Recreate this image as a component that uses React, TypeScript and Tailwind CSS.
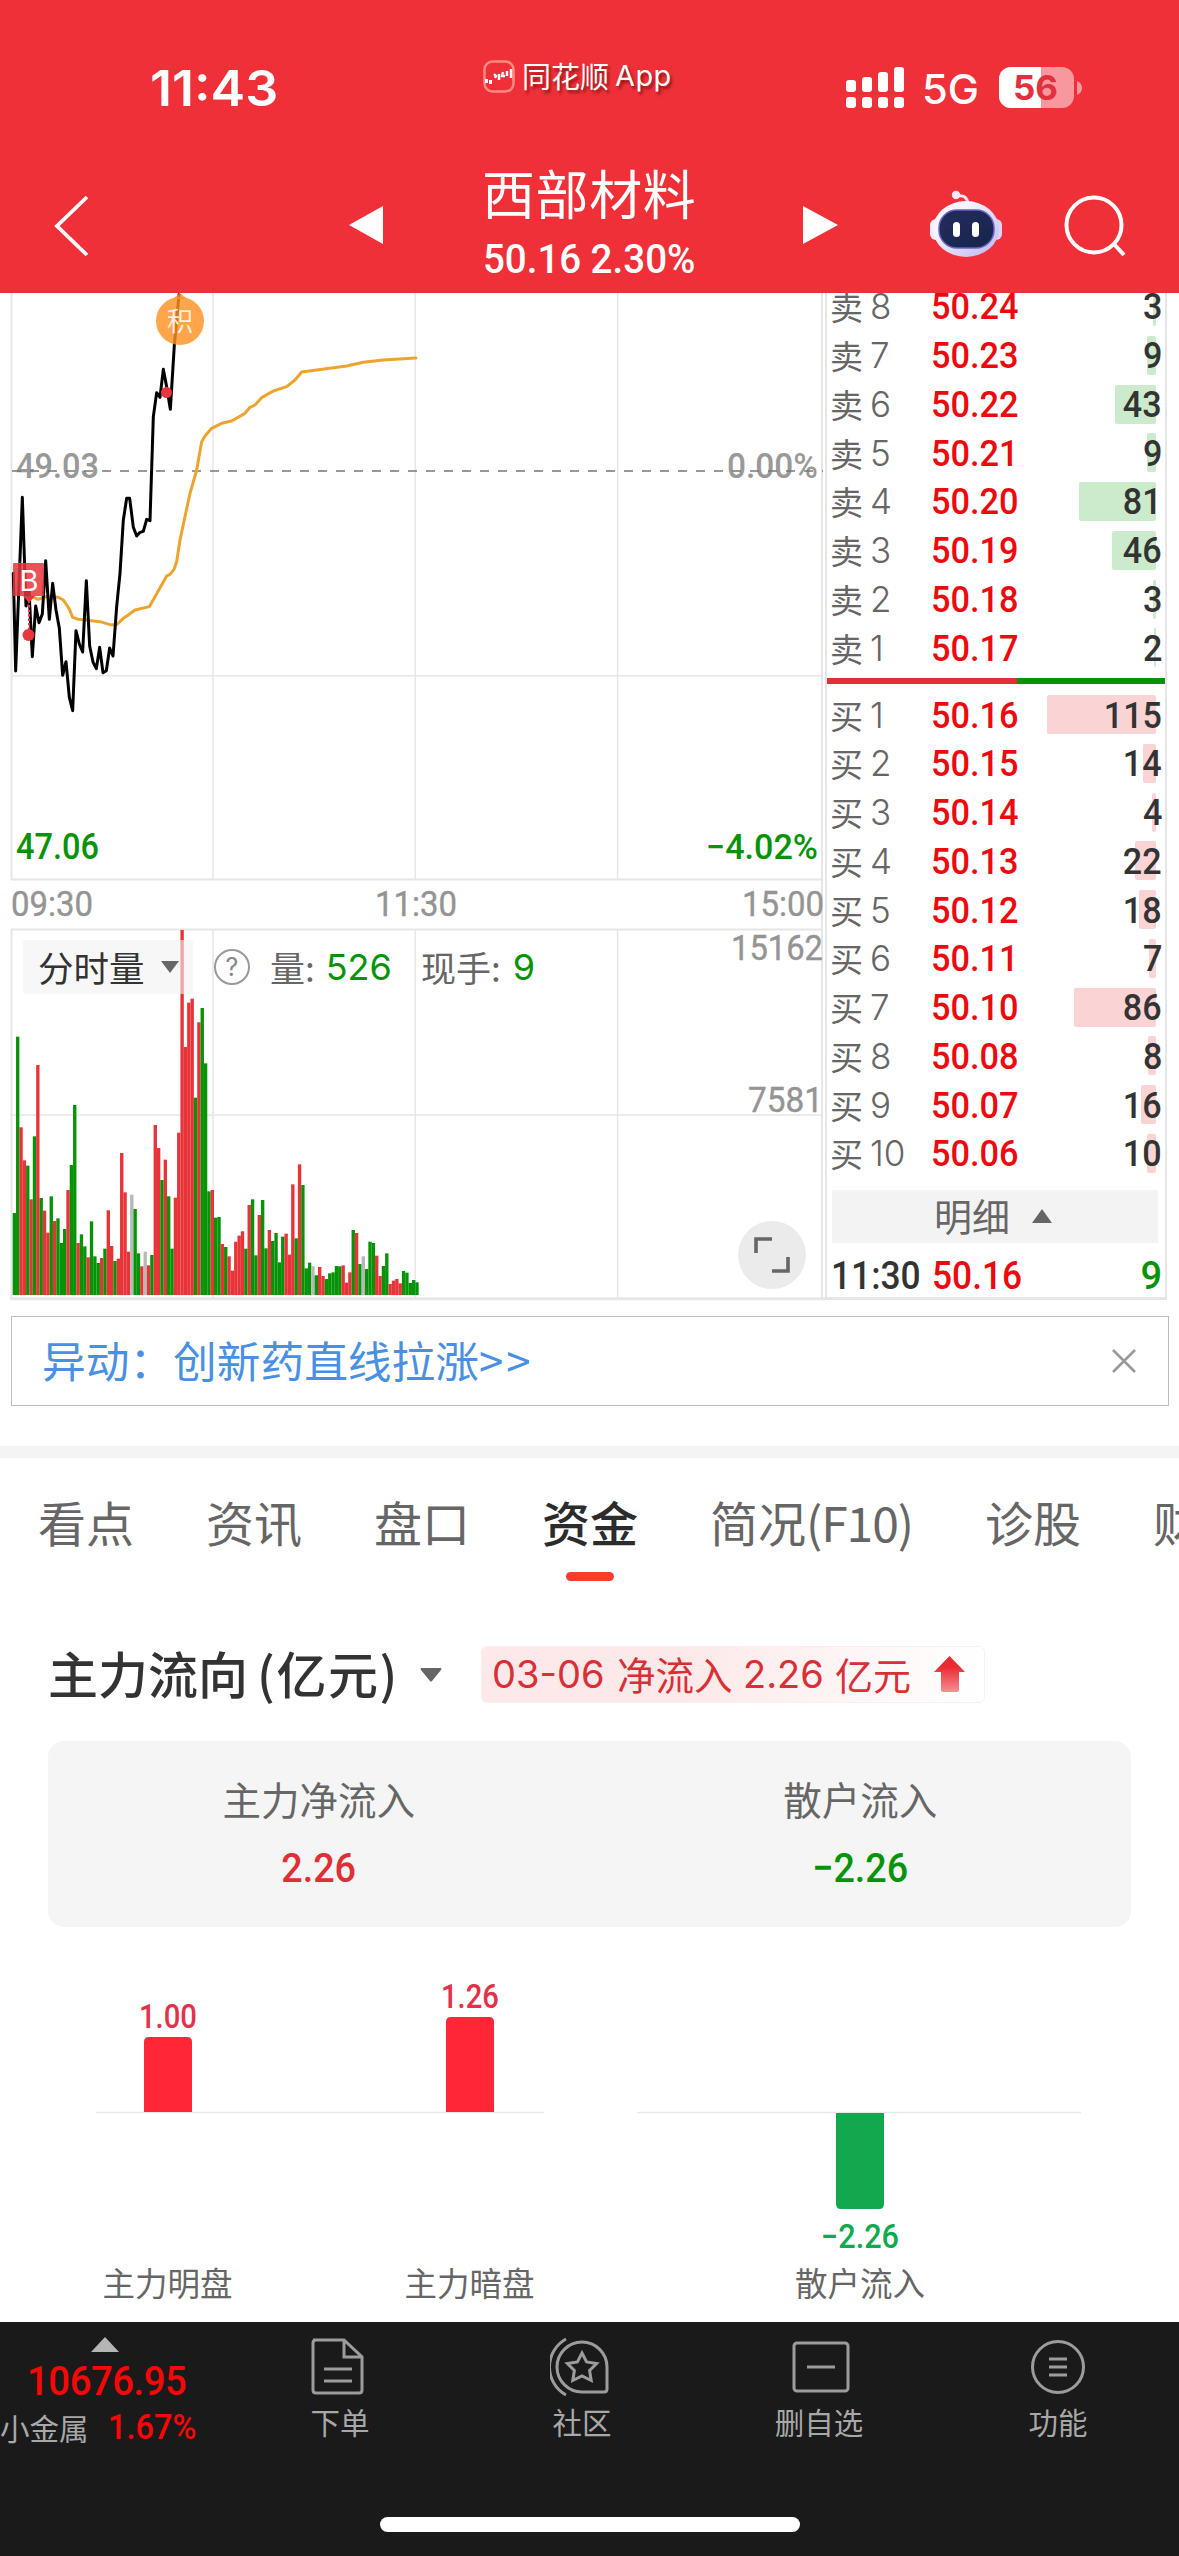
import React from "react";

type Tone = "r" | "g" | "s";

const TONES: Record<Tone, string> = { r: "#e83339", g: "#079307", s: "#b8b8b8" };

// Minute volumes: tone and bar top, in thirds of a pixel above the 795 baseline.
const VOLUMES =
  "g549 g20 r292 r391 g407 r508 g319 r105 g504 r542 r608 g499 r573 g565 g639 g597 r480 g405 g225 r639 g613 g649 r682 g574 g679 g699 r684 g656 r541 r648 g693 r686 r369 r487 r665 s494 g537 g670 r709 s665 r706 g675 r285 r354 g450 r389 g499 g656 r503 r308 r-300 r51 r-82 r-94 g203 r-23 g-66 g100 g484 r480 g563 g561 r642 g651 r679 r722 r635 r617 r604 g656 r525 g508 g676 r555 g510 g655 r600 g633 g609 g697 g620 r611 r674 r463 g625 r403 g465 g715 g698 s709 g736 r711 r738 g747 g730 g727 g708 g709 r706 r758 r727 g600 r609 g702 s679 g717 g635 g639 r677 r738 g708 g670 r762 r752 r747 r760 g723 g728 g759 g750 g757"
    .split(" ")
    .map((v) => ({ tone: v[0] as Tone, top: Number(v.slice(1)) }));

const PRICE =
  "40,850 47,1143 67,622 78,948 87,900 97,1100 107,948 117,998 127,972 137,812 148,988 158,880 168,960 178,1015 188,1156 198,1115 208,1222 218,1262 228,1022 238,1062 248,1086 259,872 269,1068 279,1116 289,1136 299,1072 309,1148 319,1142 329,1074 339,1098 350,950 360,850 370,690 380,625 389,625 400,712 410,738 420,727 430,724 440,688 450,692 460,380 470,308 480,322 490,238 500,290 511,358 523,165 537,14";

const AVERAGE =
  "95,920 115,928 135,920 175,922 190,930 207,955 218,982 235,988 300,995 330,1004 350,1004 370,985 385,975 405,960 448,950 500,858 510,853 522,838 530,815 540,750 570,610 590,540 605,455 615,438 635,415 665,400 695,393 735,370 750,352 765,345 785,323 820,303 860,290 885,270 905,246 1040,228 1090,217 1150,210 1248,204";

const ASKS = [
  ["8", "50.24", 3],
  ["7", "50.23", 9],
  ["6", "50.22", 43],
  ["5", "50.21", 9],
  ["4", "50.20", 81],
  ["3", "50.19", 46],
  ["2", "50.18", 3],
  ["1", "50.17", 2],
] as const;

const BIDS = [
  ["1", "50.16", 115],
  ["2", "50.15", 14],
  ["3", "50.14", 4],
  ["4", "50.13", 22],
  ["5", "50.12", 18],
  ["6", "50.11", 7],
  ["7", "50.10", 86],
  ["8", "50.08", 8],
  ["9", "50.07", 16],
  ["10", "50.06", 10],
] as const;

function StatusBar() {
  return (
    <div className="relative flex h-[160px] items-start justify-between">
      <div className="ml-[150px] mt-[58px] origin-left scale-x-[1.04] font-['Inter'] text-[50px] font-semibold leading-[60px]">
        11:43
      </div>
      <div className="absolute left-[483px] top-[53px] flex items-center">
        <svg width="32" height="36" viewBox="0 0 32 36" fill="none">
          <rect x="1.5" y="4.5" width="29" height="30" rx="8" stroke="#ff8a80" strokeWidth="2.5" />
          <path d="M2 24h3M6 25h3" stroke="#fff" strokeWidth="4" />
          <path d="M11 17l2 2-1 2M16 17v6M20 15l-1 4h3M24 14v5M28 12v9" stroke="#fff" strokeWidth="2.4" />
        </svg>
        <span className="ml-[7px] font-['Noto_Sans_CJK_SC',sans-serif] text-[29px] leading-[40px] [text-shadow:2px_3px_3px_rgba(80,0,0,0.6)]">
          同花顺
        </span>
        <span className="ml-[6px] mt-[3px] font-['Inter'] text-[29px] leading-[40px] tracking-[0.4px] [text-shadow:2px_3px_3px_rgba(80,0,0,0.6)]">
          App
        </span>
      </div>
      <svg className="mr-[94px] mt-[60px]" width="240" height="56" viewBox="845 60 240 56">
        <g fill="#fff">
          <rect x="846" y="80" width="10" height="12" rx="3" />
          <rect x="862" y="77" width="10" height="15" rx="3" />
          <rect x="878" y="72" width="10" height="20" rx="3" />
          <rect x="894" y="67" width="10" height="25" rx="3" />
          <rect x="846" y="97" width="10" height="11" rx="3" />
          <rect x="862" y="97" width="10" height="11" rx="3" />
          <rect x="878" y="97" width="10" height="11" rx="3" />
          <rect x="894" y="97" width="10" height="11" rx="3" />
          <text x="922" y="104" fontFamily="Inter" fontWeight="500" fontSize="41" textLength="57" lengthAdjust="spacingAndGlyphs">
            5G
          </text>
          <rect x="999" y="67" width="75" height="41" rx="12" fillOpacity="0.5" />
          <path d="M1041 67h-30a12 12 0 0 0-12 12v17a12 12 0 0 0 12 12h30z" />
          <path d="M1077 81q5 2 5 7t-5 7z" fillOpacity="0.5" />
        </g>
        <text x="1013" y="100" fontFamily="Inter" fontWeight="700" fontSize="34" fill="#e2313e" textLength="45" lengthAdjust="spacingAndGlyphs">
          56
        </text>
      </svg>
    </div>
  );
}

function Robot() {
  return (
    <svg width="74" height="70" viewBox="929 189 74 70">
      <defs>
        <linearGradient id="shell" x1="0" y1="0" x2="1" y2="1">
          <stop offset="0.3" stopColor="#f8f4fb" />
          <stop offset="1" stopColor="#b9b4f2" />
        </linearGradient>
        <linearGradient id="visor" x1="0" y1="0" x2="1" y2="1">
          <stop offset="0" stopColor="#262b5e" />
          <stop offset="1" stopColor="#14264a" />
        </linearGradient>
      </defs>
      <path d="M957 196q10-2 11 8" fill="none" stroke="#f1e4f3" strokeWidth="3" />
      <circle cx="956" cy="195" r="4.2" fill="#f6e9f5" />
      <rect x="930" y="219" width="12" height="21" rx="6" fill="#f4eefa" />
      <rect x="990" y="219" width="12" height="21" rx="6" fill="#dcd4f6" />
      <ellipse cx="966" cy="229" rx="33" ry="28" fill="url(#shell)" />
      <rect x="939" y="210" width="55" height="38" rx="18" fill="url(#visor)" stroke="#6a62c4" strokeWidth="1.5" />
      <rect x="953" y="222" width="7" height="15" rx="3.5" fill="#fff" />
      <rect x="972" y="222" width="7" height="15" rx="3.5" fill="#fff" />
    </svg>
  );
}

function TitleBar() {
  return (
    <div className="flex h-[133px] items-start">
      <svg className="ml-[53px] mt-[33px] shrink-0" width="40" height="66" fill="none">
        <path d="M34 4L4 33l30 29" stroke="#fff" strokeWidth="3.8" />
      </svg>
      <svg className="ml-[256px] mt-[46px] shrink-0" width="34" height="38">
        <path d="M0 19L34 0v38z" fill="#fff" />
      </svg>
      <div className="ml-[98px] w-[220px] shrink-0">
        <div className="-mt-[3px] h-[70px] whitespace-nowrap pl-px font-['Noto_Sans_CJK_SC',sans-serif] text-[53px] leading-[70px] tracking-[0.6px]">
          西部材料
        </div>
        <div className="mt-[7px] flex h-[50px] origin-left scale-x-[0.94] gap-[10px] whitespace-nowrap pl-[2px] font-['Roboto'] text-[41px] font-medium leading-[50px]">
          <span>50.16</span>
          <span>2.30%</span>
        </div>
      </div>
      <svg className="ml-[102px] mt-[46px] shrink-0" width="35" height="38">
        <path d="M35 19L0 0v38z" fill="#fff" />
      </svg>
      <div className="ml-[91px] mt-[29px] shrink-0">
        <Robot />
      </div>
      <svg className="ml-[59px] mt-[33px] shrink-0" width="66" height="66" fill="none" stroke="#fff" strokeWidth="4">
        <circle cx="32" cy="32" r="27.5" />
        <path d="M52 51l10 11" />
      </svg>
    </div>
  );
}

function Charts() {
  return (
    <div className="relative h-[1008px] w-[825px] shrink-0">
      <svg className="overflow-visible" width="825" height="1008" viewBox="0 293 825 1008" fontFamily="Roboto">
        <g stroke="#e6e6e6" strokeWidth="1.5">
          <path d="M213 293V880M415.3 293V880M617.6 293V880M12 675.7H823" />
          <path d="M213 929V1298M415.3 929V1298M617.6 929V1298M12 1115H823" />
          <path d="M11 879.5H823M11 929.5H823" strokeWidth="2" />
          <path d="M11.5 293V880M11.5 929V1299M822 293V1299" strokeWidth="2" />
          <path d="M10 1298.7H825" strokeWidth="3" />
        </g>
        <g fontSize="35" fontWeight="500" fill="#999">
          <text x="16" y="477.5" textLength="83" lengthAdjust="spacingAndGlyphs">49.03</text>
          <text x="727" y="477.5" textLength="91" lengthAdjust="spacingAndGlyphs">0.00%</text>
          <text x="16" y="859" fill="#079307" fontSize="36" textLength="83" lengthAdjust="spacingAndGlyphs">47.06</text>
          <text x="706" y="859" fill="#079307" textLength="112" lengthAdjust="spacingAndGlyphs">−4.02%</text>
        </g>
        <g fontSize="35.5" fill="#949494" stroke="#949494" strokeWidth="0.4">
          <text x="11" y="916" textLength="82" lengthAdjust="spacingAndGlyphs">09:30</text>
          <text x="375" y="916" textLength="82" lengthAdjust="spacingAndGlyphs">11:30</text>
          <text x="742" y="916" textLength="82" lengthAdjust="spacingAndGlyphs">15:00</text>
          <text x="731" y="960" textLength="92" lengthAdjust="spacingAndGlyphs">15162</text>
          <text x="748" y="1112" textLength="75" lengthAdjust="spacingAndGlyphs">7581</text>
        </g>
        <path d="M12 471H823" stroke="#777" strokeWidth="1.6" strokeDasharray="9 9" />
        <g transform="translate(0 290) scale(0.33333)" fill="none" strokeLinejoin="round" strokeLinecap="round">
          <polyline points={AVERAGE} stroke="#eda42c" strokeWidth="9" />
          <polyline points={PRICE} stroke="#000" strokeWidth="9" />
        </g>
        <g transform="translate(0 1030) scale(0.33333)">
          {VOLUMES.map((v, i) => (
            <rect key={i} x={38 + i * 10.066} y={v.top} width="10.1" height={795 - v.top} fill={TONES[v.tone]} />
          ))}
        </g>
        <circle cx="166.5" cy="392.5" r="5.5" fill="#e8353e" />
        <path d="M29 596V632" stroke="#e8353e" strokeWidth="2" strokeDasharray="2.5 2" />
        <circle cx="28.5" cy="635" r="6" fill="#e8353e" />
        <rect x="13" y="563" width="31" height="33" rx="1" fill="#e8353e" fillOpacity="0.85" />
        <path d="M23 596h12l-6 7z" fill="#e8353e" />
        <text x="19.5" y="590.5" fontFamily="Inter" fontSize="29" fill="#fff">B</text>
        <path d="M173 299l7-6 7 6z" fill="#ff9326" fillOpacity="0.82" />
        <circle cx="180" cy="321" r="24" fill="#ff9326" fillOpacity="0.82" />
        <text x="167" y="331" fontFamily="Noto Sans CJK SC" fontSize="26" fill="#fff" fillOpacity="0.85">积</text>
      </svg>
      <div className="absolute left-[23px] top-[647px] flex h-[54px] w-[170px] items-center rounded-[3px] bg-[#f1f1f1]/60">
        <span className="ml-[15px] font-['Noto_Sans_CJK_SC',sans-serif] text-[35.5px] leading-[54px] text-[#333]">分时量</span>
        <svg className="ml-[16px]" width="18" height="12">
          <path d="M0 0h18l-9 12z" fill="#666" />
        </svg>
      </div>
      <div className="absolute left-[214px] top-[647px] flex h-[54px] items-center whitespace-nowrap font-['Noto_Sans_CJK_SC',sans-serif] text-[35px] leading-[54px] text-[#666]">
        <span className="flex size-[36px] items-center justify-center rounded-full border-[2.5px] border-[#999] font-['Inter'] text-[25px] leading-[32px] text-[#888]">
          ?
        </span>
        <span className="ml-[20px]">量:</span>
        <span className="ml-[11px] font-['Inter'] text-[36px] text-[#079307]">526</span>
        <span className="ml-[29px]">现手:</span>
        <span className="ml-[12px] font-['Inter'] text-[36px] text-[#079307]">9</span>
      </div>
      <div className="absolute left-[738px] top-[928px] flex size-[68px] items-center justify-center rounded-full bg-[#ebebeb]">
        <svg width="36" height="36" fill="none" stroke="#666" strokeWidth="3.6">
          <path d="M2 16V2h16M34 20v14H18" />
        </svg>
      </div>
    </div>
  );
}

type BookRowProps = { side: string; level: string; price: string; qty: number; fill: string };

function BookRow({ side, level, price, qty, fill }: BookRowProps) {
  return (
    <div className="relative flex h-[48.78px] items-center pl-[3px] leading-[48px]">
      <div
        className={`absolute right-[9px] top-[5px] h-[39px] rounded-[2px] ${fill}`}
        style={{ width: Math.max(2, qty * 0.948) }}
      />
      <div className="relative flex w-[101px] items-center whitespace-nowrap text-[#666]">
        <span className="font-['Noto_Sans_CJK_SC',sans-serif] text-[33px]">{side}</span>
        <span className="ml-[7px] font-['Inter'] text-[35px] font-light">{level}</span>
      </div>
      <span className="relative origin-left scale-x-[0.915] font-['Roboto'] text-[37.5px] font-medium text-[#ec0a0e]">{price}</span>
      <span className="relative ml-auto mr-[3px] origin-right scale-x-[0.91] font-['Roboto'] text-[37.5px] font-medium text-[#333]">
        {qty}
      </span>
    </div>
  );
}

function OrderBook() {
  return (
    <div className="h-[1007px] w-[342px] shrink-0 overflow-hidden border-x-2 border-b-3 border-[#e6e6e6]">
      <div className="-mt-[11px]">
        {ASKS.map(([level, price, qty]) => (
          <BookRow key={level} side="卖" level={level} price={price} qty={qty} fill="bg-[#cbebcc]" />
        ))}
      </div>
      <div className="mt-[6px] flex h-[6px]">
        <div className="w-[190px] bg-[#df3035]" />
        <div className="flex-1 bg-[#079307]" />
      </div>
      <div className="mt-[6px]">
        {BIDS.map(([level, price, qty]) => (
          <BookRow key={level} side="买" level={level} price={price} qty={qty} fill="bg-[#fad3d5]" />
        ))}
      </div>
      <div className="ml-[5px] mt-[12px] flex h-[53px] w-[326px] items-center bg-[#f3f3f3] pl-[102px]">
        <span className="-mt-[4px] font-['Noto_Sans_CJK_SC',sans-serif] text-[38px] leading-[53px] text-[#666]">明细</span>
        <svg className="ml-[22px]" width="20" height="14">
          <path d="M0 14h20L10 0z" fill="#666" />
        </svg>
      </div>
      <div className="mt-[9px] flex h-[48px] items-center pl-[4px] font-['Roboto'] text-[38px] font-medium leading-[48px]">
        <span className="w-[101px] origin-left scale-x-[0.93] text-[#333]">11:30</span>
        <span className="origin-left scale-x-[0.93] text-[#ec0a0e]">50.16</span>
        <span className="ml-auto mr-[3px] text-[#079307]">9</span>
      </div>
    </div>
  );
}

function Tabs() {
  const tabs = ["看点", "资讯", "盘口", "资金", "简况(F10)", "诊股", "财务"];
  return (
    <div className="flex h-[132px] gap-[72px] overflow-hidden whitespace-nowrap pl-[38px] font-['Noto_Sans_CJK_SC',sans-serif] text-[48px] leading-[70px] text-[#666]">
      {tabs.map((t) =>
        t === "资金" ? (
          <div key={t} className="flex shrink-0 flex-col items-center pt-[28px] font-medium text-[#2c2c2c]">
            {t}
            <div className="mt-[16px] h-[9px] w-[48px] rounded-full bg-[#ff3b30]" />
          </div>
        ) : t.includes("(") ? (
          <div key={t} className="w-[203px] shrink-0 pt-[28px]">
            {t.slice(0, 2)}
            <span className="tracking-[-1.1px]">{t.slice(2)}</span>
          </div>
        ) : (
          <div key={t} className="shrink-0 pt-[28px]">
            {t}
          </div>
        ),
      )}
    </div>
  );
}

function FlowHeader() {
  return (
    <div className="mt-[56px] flex h-[57px] items-center pl-[48px]">
      <div className="-mt-[4px] flex w-[347px] items-center whitespace-nowrap font-['Noto_Sans_CJK_SC',sans-serif] text-[50px] font-medium leading-[57px] text-[#333]">
        主力流向<span className="ml-[9px] tracking-[1.6px]">(亿元)</span>
      </div>
      <svg className="ml-[25px]" width="22" height="14">
        <path d="M1 0h20q1 1 0 2L12 13q-1 1-2 0L1 2q-1-1 0-2z" fill="#666" />
      </svg>
      <div className="ml-[39px] flex h-[57px] w-[504px] items-center whitespace-nowrap rounded-[6px] border border-[#fdeeee] bg-gradient-to-r from-[#fde9e9] from-40% to-white pl-[10px] text-[38px] leading-[55px] text-[#d93038]">
        <span className="w-[125px] font-['Inter'] text-[38px]">03-06</span>
        <span className="-mt-[3px] w-[126px] font-['Noto_Sans_CJK_SC',sans-serif] text-[38.5px]">净流入</span>
        <span className="w-[92px] font-['Inter'] text-[38px]">2.26</span>
        <span className="-mt-[3px] font-['Noto_Sans_CJK_SC',sans-serif] text-[38px]">亿元</span>
        <svg className="ml-[23px]" width="31" height="37">
          <defs>
            <linearGradient id="rise" x1="0" y1="0" x2="0" y2="1">
              <stop offset="0.3" stopColor="#ea2a30" />
              <stop offset="1" stopColor="#f58f93" />
            </linearGradient>
          </defs>
          <path d="M15.500 0L31 16H25V34q0 2-2 2H9q-2 0-2-2V16H0z" fill="url(#rise)" />
        </svg>
      </div>
    </div>
  );
}

function Summary({ label, value, color }: { label: string; value: string; color: string }) {
  return (
    <div className="flex flex-1 flex-col items-center pt-[27px]">
      <div className="font-['Noto_Sans_CJK_SC',sans-serif] text-[38.5px] leading-[60px] text-[#666]">{label}</div>
      <div className={`mt-[15px] scale-x-[0.92] font-['Roboto'] text-[41px] font-medium leading-[50px] ${color}`}>{value}</div>
    </div>
  );
}

function FlowBars() {
  return (
    <svg width="1179" height="395" viewBox="0 1927 1179 395" className="block" textAnchor="middle">
      <path d="M96 2112.500H544M637 2112.500H1081" stroke="#e9e9e9" strokeWidth="1.5" />
      <path d="M144 2112V2042q0-5 5-5h38q5 0 5 5v70z" fill="#ff2737" />
      <path d="M446 2112V2022q0-5 5-5h38q5 0 5 5v90z" fill="#ff2737" />
      <path d="M836 2113V2204q0 5 5 5h38q5 0 5-5v-91z" fill="#11a84e" />
      <g fontFamily="Roboto" fontWeight="500" fontSize="33" fill="#e5304a">
        <text x="168" y="2028" textLength="58" lengthAdjust="spacingAndGlyphs">1.00</text>
        <text x="470" y="2008" textLength="58" lengthAdjust="spacingAndGlyphs">1.26</text>
        <text x="860" y="2248" textLength="78" lengthAdjust="spacingAndGlyphs" fill="#11a84e">−2.26</text>
      </g>
      <g fontFamily="Noto Sans CJK SC" fontSize="32.500" fill="#666">
        <text x="167.500" y="2296">主力明盘</text>
        <text x="469.500" y="2296">主力暗盘</text>
        <text x="860" y="2296">散户流入</text>
      </g>
    </svg>
  );
}

function NavItem({ label, className, children }: { label: string; className: string; children: React.ReactNode }) {
  return (
    <div className={`flex shrink-0 flex-col items-center pt-[14px] ${className}`}>
      <svg width="64" height="62" fill="none" stroke="#9c9c9c" strokeWidth="3">
        {children}
      </svg>
      <div className="mt-[2px] whitespace-nowrap font-['Noto_Sans_CJK_SC',sans-serif] text-[29.5px] leading-[42px] text-[#a8a8a8]">{label}</div>
    </div>
  );
}

function BottomNav() {
  return (
    <div className="h-[234px] bg-[#1a1a1a]">
      <div className="flex h-[195px]">
        <div className="w-[220px] shrink-0 pt-[15px]">
          <svg className="ml-[91px] block" width="28" height="15">
            <path d="M0 15h28L14 0z" fill="#b5b5b5" />
          </svg>
          <div className="ml-[27px] mt-[4px] origin-left scale-x-[0.935] font-['Roboto'] text-[41px] font-medium leading-[50px] tracking-[-0.5px] text-[#fb0606]">
            10676.95
          </div>
          <div className="flex h-[44px] items-center whitespace-nowrap">
            <span className="-mt-[2px] w-[108px] font-['Noto_Sans_CJK_SC',sans-serif] text-[29.5px] leading-[44px] text-[#a8a8a8]">小金属</span>
            <span className="origin-left scale-x-[0.93] font-['Roboto'] text-[35px] font-medium leading-[40px] text-[#fb0606]">1.67%</span>
          </div>
        </div>
        <NavItem label="下单" className="ml-[88px] w-[64px]">
          <path d="M5 4h31l18 17v33q0 3-3 3H8q-3 0-3-3V7q0-3 3-3M36 4v17h18M16 33h28M16 45h28" />
        </NavItem>
        <NavItem label="社区" className="ml-[178px] w-[64px]">
          <path d="M32 6a25 25 0 0 0 0 50h22q3 0 3-3V31A25 25 0 0 0 32 6zM16 3a32 32 0 0 0 0 56" />
          <path d="M32 17l4.600 9 10 1.500-7 7 1.600 10L32 40l-9.200 4.500 1.600-10-7-7 10-1.500z" />
        </NavItem>
        <NavItem label="删自选" className="ml-[158px] w-[94px]">
          <rect x="7" y="7" width="54" height="48" rx="3" />
          <path d="M20 31h28" />
        </NavItem>
        <NavItem label="功能" className="ml-[160px] w-[64px]">
          <circle cx="32" cy="31" r="25.500" />
          <path d="M23 23h18M23 31h18M23 39h18" />
        </NavItem>
      </div>
      <div className="mx-auto h-[15px] w-[420px] rounded-full bg-white" />
    </div>
  );
}

export default function App() {
  return (
    <div className="h-[2556px] w-[1179px] overflow-hidden bg-white">
      <header className="h-[293px] bg-[#f03038] text-white">
        <StatusBar />
        <TitleBar />
      </header>
      <section className="flex h-[1008px]">
        <Charts />
        <OrderBook />
      </section>
      <div className="ml-[11px] mt-[15px] flex h-[90px] w-[1158px] items-center justify-between border border-[#bdbdbd] pl-[30px] pr-[32px]">
        <span className="-mt-[4px] font-['Noto_Sans_CJK_SC',sans-serif] text-[43.7px] leading-[88px] text-[#4a90e2]">
          异动：创新药直线拉涨<span className="tracking-[3px]">&gt;&gt;</span>
        </span>
        <svg width="24" height="24" stroke="#999" strokeWidth="2.6">
          <path d="M1 1l22 22M23 1L1 23" />
        </svg>
      </div>
      <div className="mt-[40px] h-[12px] bg-[#f4f4f4]" />
      <Tabs />
      <FlowHeader />
      <div className="ml-[48px] mt-[38px] flex h-[186px] w-[1083px] rounded-[16px] bg-[#f5f5f5]">
        <Summary label="主力净流入" value="2.26" color="text-[#df3035]" />
        <Summary label="散户流入" value="−2.26" color="text-[#079307]" />
      </div>
      <FlowBars />
      <BottomNav />
    </div>
  );
}
